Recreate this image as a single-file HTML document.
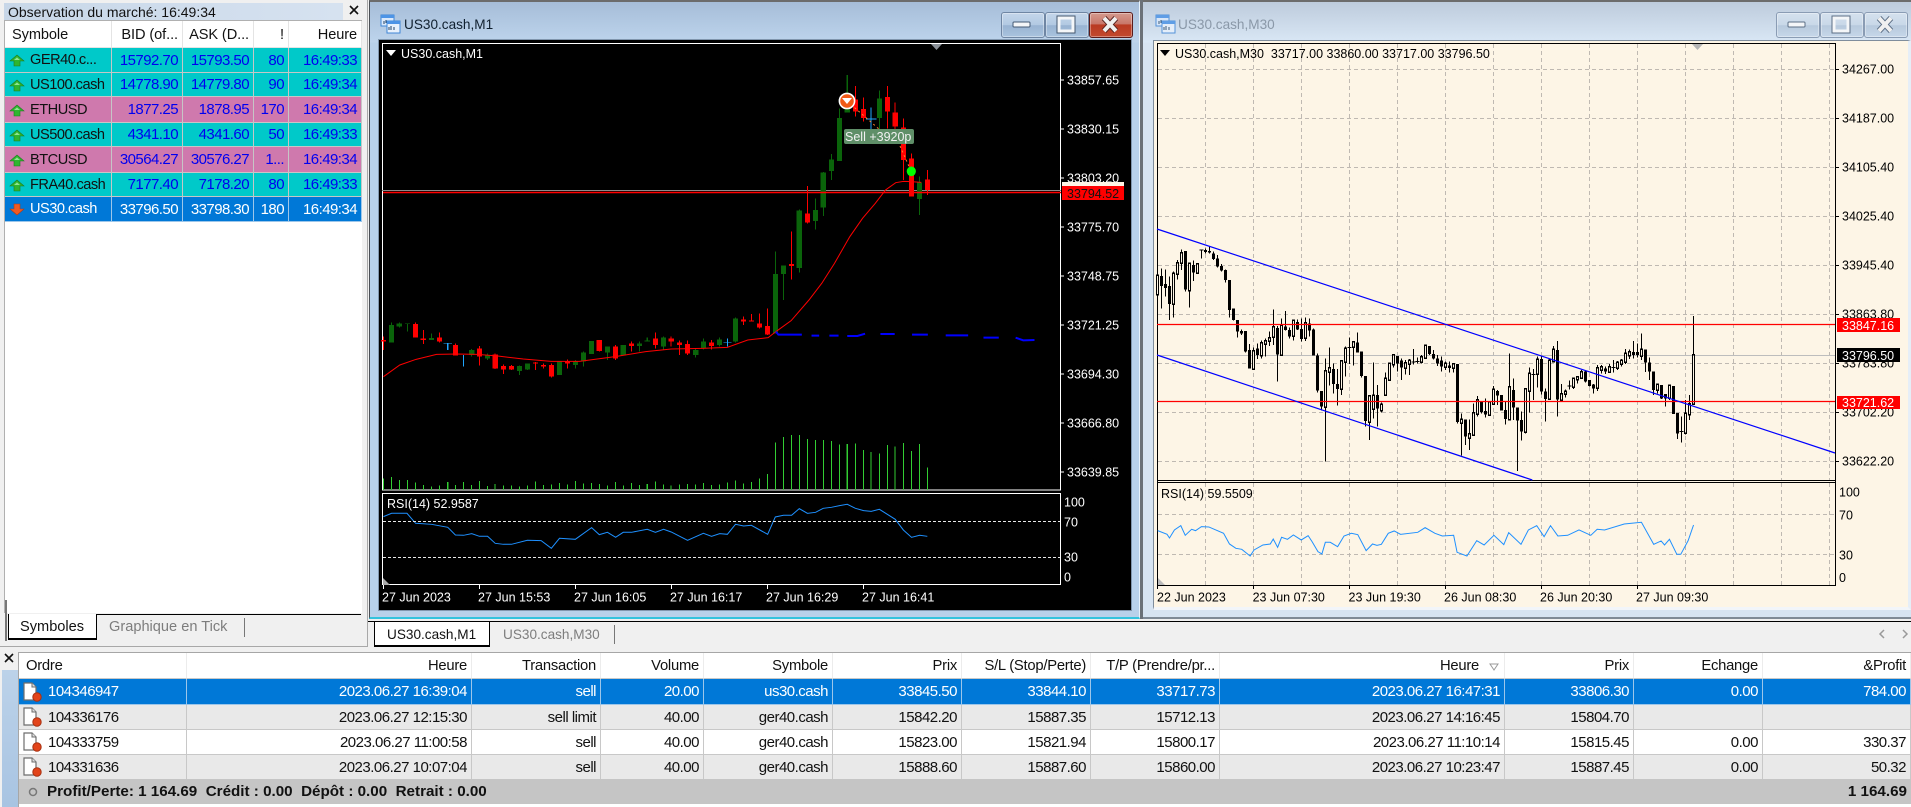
<!DOCTYPE html>
<html lang="fr"><head><meta charset="utf-8"><title>MT4</title>
<style>
html,body{margin:0;padding:0;width:1911px;height:807px;overflow:hidden;background:#f0f0f0;font-family:"Liberation Sans",sans-serif;color:#111}
.a{position:absolute;box-sizing:border-box}
.t{position:absolute;white-space:pre;line-height:18px}
table{position:absolute;border-collapse:separate;border-spacing:0;table-layout:fixed}
td{box-sizing:border-box;padding:0 4px 0 0;text-align:right;white-space:nowrap;overflow:hidden;vertical-align:middle}
#mw{left:5px;top:21px;width:357px;font-size:15px;letter-spacing:-.55px}
#mw td{border-right:1px solid #c6c6c6;border-bottom:1px solid #c6c6c6;color:#0000f0}
#mw tr.h td{font-size:14.6px;letter-spacing:-.1px;color:#111;border-right:1px solid #e4e4e4;border-bottom:1px solid #e4e4e4;background:#fff;padding-top:2px}
#mw td:first-child{text-align:left;padding-left:25px;color:#111;font-size:14.6px;letter-spacing:-.5px}
#mw tr.h td:first-child{padding-left:7px;font-size:14.6px;letter-spacing:-.1px}
.c td{background:#00c9c9}.p td{background:#cf79ad}
#mw tr.s td,#tr tr.s td{background:#0078d7;color:#fff;border-color:#9cc6ea}
#tr{left:19px;top:653px;width:1892px;font-size:15px;letter-spacing:-.5px}
#tr td{border-right:1px solid #c8c8c8;border-bottom:1px solid #c8c8c8;background:#fff}
#tr tr.h td{font-size:14.8px;letter-spacing:-.25px;border-right:1px solid #ececec;border-bottom:1px solid #c8c8c8}
#tr tr.g td{background:#e9e9e9}
#tr td:first-child{text-align:left;padding-left:29px}
#tr tr.h td:first-child{padding-left:7px}
.w{background:linear-gradient(#a6bdd8,#bdd4ec 40px,#b8d1ea 41px)}
.w2{background:linear-gradient(#bdcbdc,#d9e7f5 40px,#d7e4f2 41px)}
.b{position:absolute;top:12px;width:42px;height:24px;border:1px solid #6f86a3;border-radius:3px;background:linear-gradient(#c4d6ea,#b2c9e2 50%,#98b3d2 52%,#a9c3de);box-shadow:inset 0 0 0 1px rgba(255,255,255,.35)}
.x{background:linear-gradient(#d59a8e,#c9776a 45%,#b93a22 50%,#c2492f);border-color:#5a1b1b}
.b2{border-color:#8a9cb4;background:linear-gradient(#d5e1ee,#c9d8e8 50%,#b7c9dd 52%,#c6d7e9)}
text{font-family:"Liberation Sans",sans-serif;font-size:12.5px}
</style></head><body>

<!-- Market watch -->
<div class="a" style="left:4px;top:3px;width:339px;height:17px;background:linear-gradient(90deg,#c8d7e8,#d6e2f0)"></div>
<div class="t" style="left:8px;top:3px;font-size:14px">Observation du marché: 16:49:34</div>
<div class="a" style="left:4px;top:20px;width:358px;height:593px;background:#fff;border-left:1px solid #b0b0b0;border-top:1px solid #b0b0b0"></div>
<table id="mw"><colgroup><col style="width:107px"><col style="width:71px"><col style="width:71px"><col style="width:35px"><col style="width:73px"></colgroup>
<tr class="h" style="height:27px"><td>Symbole</td><td>BID (of...</td><td>ASK (D...</td><td>!</td><td>Heure</td></tr>
<tr class="c" style="height:25px"><td>GER40.c...</td><td>15792.70</td><td>15793.50</td><td>80</td><td>16:49:33</td></tr>
<tr class="c" style="height:24px"><td>US100.cash</td><td>14778.90</td><td>14779.80</td><td>90</td><td>16:49:34</td></tr>
<tr class="p" style="height:26px"><td>ETHUSD</td><td>1877.25</td><td>1878.95</td><td>170</td><td>16:49:34</td></tr>
<tr class="c" style="height:24px"><td>US500.cash</td><td>4341.10</td><td>4341.60</td><td>50</td><td>16:49:33</td></tr>
<tr class="p" style="height:26px"><td>BTCUSD</td><td>30564.27</td><td>30576.27</td><td>1...</td><td>16:49:34</td></tr>
<tr class="c" style="height:24px"><td>FRA40.cash</td><td>7177.40</td><td>7178.20</td><td>80</td><td>16:49:33</td></tr>
<tr class="s" style="height:25px"><td style="color:#fff">US30.cash</td><td>33796.50</td><td>33798.30</td><td>180</td><td>16:49:34</td></tr>
</table>

<!-- Left tabs -->
<div class="a" style="left:0;top:613px;width:367px;height:33px;background:#f0f0f0"></div>
<div class="a" style="left:5px;top:600px;width:2px;height:41px;background:#777"></div>
<div class="a" style="left:96px;top:614px;width:265px;height:1px;background:#000"></div>
<div class="a" style="left:8px;top:614px;width:89px;height:26px;background:#fff;border:1px solid #000;border-top:0;border-bottom-width:2px"></div>
<div class="t" style="left:20px;top:618px;font-size:14.6px">Symboles</div>
<div class="t" style="left:109px;top:618px;font-size:14.6px;color:#7d7d7d">Graphique en Tick</div>
<div class="a" style="left:244px;top:618px;width:1px;height:19px;background:#777"></div>
<div class="a" style="left:367px;top:0;width:1px;height:646px;background:#a8a8a8"></div>
<div class="a" style="left:0;top:646px;width:368px;height:1px;background:#a8a8a8"></div>

<!-- Window 1 -->
<div class="a w" style="left:369px;top:0;width:771px;height:619px;border:1px solid #4a4f55;border-right:1px solid #e8f2fa;border-top:2px solid #6c6c6c;border-bottom:2px solid #33c3dd"></div>
<div class="a" style="left:379px;top:40px;width:752px;height:570px;background:#000;box-shadow:0 0 0 1px #8096ad"></div>
<div class="t" style="left:404px;top:16px;font-size:13.6px;color:#10202f">US30.cash,M1</div>
<div class="b" style="left:1001px"></div><div class="b" style="left:1045px"></div><div class="b x" style="left:1089px"></div>

<!-- Window 2 -->
<div class="a" style="left:1140px;top:0;width:3px;height:619px;background:#6b7178"></div>
<div class="a w2" style="left:1143px;top:0;width:768px;height:619px;border-top:2px solid #6c6c6c;border-bottom:2px solid #7f8a96"></div>
<div class="a" style="left:1153px;top:40px;width:758px;height:570px;background:#fdf5e6;border:1px solid #7f8d9c;border-right:3px solid #e6eef7;border-bottom:3px solid #f2f5f9"></div>
<div class="t" style="left:1178px;top:16px;font-size:13.6px;color:#8a98a8">US30.cash,M30</div>
<div class="b b2" style="left:1776px"></div><div class="b b2" style="left:1820px"></div><div class="b b2" style="left:1864px"></div>

<!-- Lower tabs -->
<div class="a" style="left:368px;top:620px;width:1543px;height:32px;background:#f0f0f0"></div>
<div class="a" style="left:368px;top:621px;width:1543px;height:1px;background:#000"></div>
<div class="a" style="left:374px;top:622px;width:116px;height:25px;background:#fff;border:1px solid #000;border-top:0;border-bottom-width:2px"></div>
<div class="t" style="left:387px;top:626px;font-size:13.6px">US30.cash,M1</div>
<div class="t" style="left:503px;top:626px;font-size:13.6px;color:#7d7d7d">US30.cash,M30</div>
<div class="a" style="left:614px;top:625px;width:1px;height:19px;background:#777"></div>

<!-- Terminal -->
<div class="a" style="left:0;top:647px;width:1911px;height:160px;background:#f0f0f0"></div>
<div class="a" style="left:19px;top:652px;width:1892px;height:2px;background:#a6a6a6"></div>
<div class="a" style="left:18px;top:652px;width:1px;height:155px;background:#a6a6a6"></div>
<div class="a" style="left:2px;top:670px;width:16px;height:137px;background:linear-gradient(#bcd2e9,#a8c4e2)"></div>
<table id="tr"><colgroup><col style="width:168px"><col style="width:285px"><col style="width:129px"><col style="width:103px"><col style="width:129px"><col style="width:129px"><col style="width:129px"><col style="width:129px"><col style="width:285px"><col style="width:129px"><col style="width:129px"><col style="width:148px"></colgroup>
<tr class="h" style="height:26px"><td>Ordre</td><td>Heure</td><td>Transaction</td><td>Volume</td><td>Symbole</td><td>Prix</td><td>S/L (Stop/Perte)</td><td>T/P (Prendre/pr...</td><td style="padding-right:25px">Heure</td><td>Prix</td><td>Echange</td><td>&amp;Profit</td></tr>
<tr class="s" style="height:26px"><td>104346947</td><td>2023.06.27 16:39:04</td><td>sell</td><td>20.00</td><td>us30.cash</td><td>33845.50</td><td>33844.10</td><td>33717.73</td><td>2023.06.27 16:47:31</td><td>33806.30</td><td>0.00</td><td>784.00</td></tr>
<tr class="g" style="height:25px"><td>104336176</td><td>2023.06.27 12:15:30</td><td>sell limit</td><td>40.00</td><td>ger40.cash</td><td>15842.20</td><td>15887.35</td><td>15712.13</td><td>2023.06.27 14:16:45</td><td>15804.70</td><td></td><td></td></tr>
<tr style="height:25px"><td>104333759</td><td>2023.06.27 11:00:58</td><td>sell</td><td>40.00</td><td>ger40.cash</td><td>15823.00</td><td>15821.94</td><td>15800.17</td><td>2023.06.27 11:10:14</td><td>15815.45</td><td>0.00</td><td>330.37</td></tr>
<tr class="g" style="height:25px"><td>104331636</td><td>2023.06.27 10:07:04</td><td>sell</td><td>40.00</td><td>ger40.cash</td><td>15888.60</td><td>15887.60</td><td>15860.00</td><td>2023.06.27 10:23:47</td><td>15887.45</td><td>0.00</td><td>50.32</td></tr>
</table>
<div class="a" style="left:19px;top:779px;width:1892px;height:25px;background:#c5c5c5"></div>
<div class="t" style="left:47px;top:783px;font-size:15.2px;font-weight:bold">Profit/Perte: 1 164.69  Crédit : 0.00  Dépôt : 0.00  Retrait : 0.00</div>
<div class="t" style="right:4px;top:783px;font-size:15.2px;font-weight:bold">1 164.69</div>
<div class="a" style="left:19px;top:804px;width:1892px;height:3px;background:#fff"></div>

<!-- Graphics overlay -->
<svg class="a" style="left:0;top:0" width="1911" height="807" viewBox="0 0 1911 807" xmlns="http://www.w3.org/2000/svg">
<defs>
<g id="up"><path d="M0 6L7 0L14 6H10V11H4V6Z" fill="#2fb52f" stroke="#1e7d1e" stroke-width=".6"/><path d="M4 5L7 2.4L10 5Z" fill="#8fe48f"/></g>
<g id="dn"><path d="M0 5L7 11L14 5H10V0H4V5Z" fill="#ef5a22" stroke="#b83a10" stroke-width=".6"/></g>
<g id="doc"><path d="M1 1H9L13 5V18H1Z" fill="#fff" stroke="#6d6d6d" stroke-width="1.2"/><path d="M9 1V5H13" fill="#ddd" stroke="#6d6d6d"/><circle cx="14" cy="15" r="4.2" fill="#e2441a" stroke="#a83010"/></g>
<g id="wi"><rect x="0" y="0" width="13" height="11" fill="#dbe9fb" stroke="#3f86d6"/><rect x="0" y="0" width="13" height="3" fill="#4d94e6"/><rect x="6" y="6" width="13" height="12" fill="#e8f1fc" stroke="#3f86d6"/><rect x="6" y="6" width="13" height="3" fill="#4d94e6"/><path d="M3 6V9M5 5V8M8 12V15M10 11V15M13 12V15" stroke="#246" fill="none"/></g>
</defs>

<!-- panel close, arrows -->
<path d="M350 6L358 14M358 6L350 14M5 654L13 662M13 654L5 662" stroke="#111" stroke-width="1.6" fill="none"/>
<use href="#up" x="10" y="55"/><use href="#up" x="10" y="80"/><use href="#up" x="10" y="105"/><use href="#up" x="10" y="130"/><use href="#up" x="10" y="155"/><use href="#up" x="10" y="180"/><use href="#dn" x="10" y="204"/>
<use href="#doc" x="23" y="682"/><use href="#doc" x="23" y="707"/><use href="#doc" x="23" y="732"/><use href="#doc" x="23" y="757"/>
<circle cx="33" cy="792" r="3.5" fill="#c5c5c5" stroke="#777" stroke-width="1.5"/>
<path d="M1490 664H1498L1494 670Z" fill="none" stroke="#999"/>
<path d="M1884 630L1880 634L1884 638M1903 630L1907 634L1903 638" stroke="#999" stroke-width="1.5" fill="none"/>

<!-- title icons and buttons -->
<use href="#wi" x="381" y="15"/><use href="#wi" x="1156" y="15" opacity=".85"/>
<rect x="1013" y="22" width="17" height="5" rx="1" fill="#f4f6f8" stroke="#445a75"/>
<rect x="1059" y="18" width="14" height="13" fill="none" stroke="#f4f6f8" stroke-width="3"/><rect x="1057" y="16" width="18" height="17" fill="none" stroke="#45586f"/>
<path d="M1104 18L1116 31M1116 18L1104 31" stroke="#5a2420" stroke-width="6"/><path d="M1104 18L1116 31M1116 18L1104 31" stroke="#f0f0f0" stroke-width="4"/>
<rect x="1788" y="22" width="17" height="5" rx="1" fill="#f4f6f8" stroke="#5c6f86"/>
<rect x="1834" y="18" width="14" height="13" fill="none" stroke="#f4f6f8" stroke-width="3"/><rect x="1832" y="16" width="18" height="17" fill="none" stroke="#5c6f86"/>
<path d="M1879 18L1891 31M1891 18L1879 31" stroke="#5c6f86" stroke-width="6"/><path d="M1879 18L1891 31M1891 18L1879 31" stroke="#f0f0f0" stroke-width="4"/>

<!-- CHART 1 -->
<rect x="382.5" y="43.5" width="678" height="446.5" fill="#000" stroke="#fff"/>
<rect x="382.5" y="493.5" width="678" height="91" fill="#000" stroke="#fff"/>
<path d="M931 44H942L936.5 50Z" fill="#8a9097"/>
<path d="M386 50H396L391 56Z" fill="#fff"/>
<text x="401" y="58" fill="#fff">US30.cash,M1</text>
<path d="M383 578V585H390Z" fill="#aaa"/>

<path d="M382 190.5H1061" stroke="#8c8c8c" fill="none"/>
<g transform="translate(360,300) scale(.5102,.3333)" fill="none" shape-rendering="crispEdges">
<path stroke="#32cd32" stroke-width="2" d="M46 535V570M62 531V570M77 540V570M93 540V570M109 548V570M124 555V570M140 560V570M156 556V570M172 546V570M187 555V570M203 546V570M219 555V570M234 543V570M250 558V570M265 552V570M281 556V570M297 556V570M313 560V570M328 556V570M344 544V570M360 555V570M375 554V570M391 549V570M407 554V570M422 543V570M438 550V570M454 549V570M469 552V570M485 556V570M501 546V570M516 556V570M532 549V570M548 555V570M563 552V570M579 544V570M595 553V570M610 556V570M626 553V570M642 552V570M658 554V570M673 549V570M689 555V570M705 554V570M720 548V570M736 541V570M752 550V570M767 546V570M783 536V570M799 522V570M814 428V570M830 411V570M846 405V570M861 405V570M877 417V570M893 420V570M908 420V570M924 423V570M940 433V570M955 432V570M971 430V570M987 450V570M1002 456V570M1018 461V570M1034 435V570M1049 440V570M1065 429V570M1081 453V570M1097 432V570M1112 503V570"/>
<path stroke="#0a640a" stroke-width="2" d="M62 68V128M77 68V82M93 70V95M140 100V120M219 147V170M250 160V180M313 197V225M328 190V210M391 185V225M422 180V205M438 155V200M454 123V162M485 140V180M516 135V167M548 125V155M563 112V125M595 110V148M658 145V173M673 115V148M705 113V140M736 52V128"/>
<path stroke="#0a640a" stroke-width="10" d="M62 75V128M77 70V80M93 70V72M140 114V120M219 150V165M250 165V175M313 198V213M328 190V208M391 185V225M422 185V195M438 157V185M454 123V162M485 140V158M516 135V167M548 130V138M563 121V125M595 112V140M658 150V165M673 125V145M705 118V135M736 55V125"/>
<path stroke="#f00" stroke-width="2" d="M46 110V150M109 68V113M124 90V132M156 97V127M187 130V167M234 138V197M265 160V207M281 193V222M297 195V210M344 186V210M360 190V205M375 190V233M407 178V205M469 120V155M501 135V180M532 125V155M579 97V145M610 110V140M626 122V165M642 122V165M689 120V148M752 50V75M767 42V65M783 40V85M799 25V105"/>
<path stroke="#f00" stroke-width="10" d="M46 120V125M109 72V113M124 115V120M156 112V125M187 135V167M234 145V170M265 163V205M281 198V208M297 198V208M344 188V190M360 195V200M375 195V230M407 183V191M469 120V153M501 140V175M532 130V138M579 115V135M610 115V125M626 127V135M642 132V160M689 127V138M752 58V65M767 62V64M783 70V82M799 78V103"/>
<path stroke="#1fa6ff" stroke-width="2" d="M203 165V200M172 130V150M164 130H180M720 115V140M712 127H728"/>
</g>
<g transform="translate(360,0) scale(.5102,.3333)" fill="none" shape-rendering="crispEdges">
<path stroke="#0a640a" stroke-width="2" d="M814 755V1000M830 797V900M861 628V818M893 595V688M908 516V648M924 462V540M940 325V483M955 225V338M1018 272V390M1097 530V645"/>
<path stroke="#0a640a" stroke-width="10" d="M814 822V1000M830 797V822M861 632V804M893 630V663M908 518V623M924 478V513M940 354V483M955 325V338M1018 295V354M1097 548V597"/>
<path stroke="#f00" stroke-width="2" d="M846 695V838M877 558V670M971 258V350M987 293V365M1034 258V385M1049 307V400M1065 355V540M1081 460V590M1112 510V585"/>
<path stroke="#f00" stroke-width="10" d="M846 792V798M877 640V668M971 298V335M987 327V354M1034 291V335M1049 337V380M1065 382V480M1081 475V590M1112 538V570"/>
<path stroke="#1fa6ff" stroke-width="2" d="M1002 323V390M992 357H1012"/>
</g>
<g transform="translate(360,300) scale(.5102,.3333)" fill="none">
<path vector-effect="non-scaling-stroke" stroke="#f00" d="M46 230L78 195L110 178L150 163L190 162L230 163L270 168L320 177L375 184L430 184L500 170L560 155L610 147L670 145L720 142L760 120L800 113L815 95L845 62L880 0L905 -50L930 -110L960 -190L985 -245L1010 -290L1030 -330L1050 -352L1065 -356L1080 -355L1100 -353"/>
<path vector-effect="non-scaling-stroke" stroke="#00f" stroke-width="2" d="M815 95L820 104H866M885 107H900M920 107H938M955 108H975L990 101M1020 102H1048M1082 104H1113M1148 106H1192M1222 113H1252M1285 113L1300 121L1322 120"/>
<path vector-effect="non-scaling-stroke" stroke="#1e90ff" d="M46 650L62 640L92 640L109 670L140 673L172 682L187 705L203 706L219 701L234 709L250 709L265 730L281 733L297 733L328 721L355 722L375 745L391 715L422 718L454 683L469 704L485 697L501 712L516 697L532 697L563 688L579 697L595 688L610 696L642 721L673 700L689 709L705 701L720 703L736 673L752 678L767 676L799 703L814 651L830 646L846 646L861 626L877 640L893 637L908 625L924 622L940 617L955 613L971 625L987 632L1002 634L1018 628L1049 658L1065 690L1081 712L1097 706L1112 709"/>
</g>
<path d="M383 192.5H1061" stroke="#f00" fill="none" stroke-width="1.4"/>
<path d="M383 521.5H1060M383 557.5H1060" stroke="#e8e8e8" stroke-dasharray="3 2" fill="none"/>
<path d="M847 101L880 130M900 146L911 171" stroke="#ff7f2a" stroke-dasharray="2 3" fill="none"/>
<circle cx="847" cy="101" r="7.6" fill="#f15a16" stroke="#fff" stroke-width="1.6"/><path d="M842 98H852L847 104Z" fill="#fff"/>
<ellipse cx="911.3" cy="171.3" rx="4.6" ry="4.8" fill="#0f0"/>
<rect x="844" y="129" width="70" height="15" rx="2" fill="#5f8f68"/>
<text x="845" y="141" fill="#f2f2f2">Sell +3920p</text>
<g fill="#fff">
<text x="1067" y="84.5">33857.65</text><text x="1067" y="133.5">33830.15</text><text x="1067" y="182.5">33803.20</text><text x="1067" y="231.5">33775.70</text><text x="1067" y="280.5">33748.75</text><text x="1067" y="329.5">33721.25</text><text x="1067" y="378.5">33694.30</text><text x="1067" y="427.5">33666.80</text><text x="1067" y="476.5">33639.85</text>
<text x="1064" y="506.5">100</text><text x="1064" y="526.5">70</text><text x="1064" y="561.5">30</text><text x="1064" y="581.5">0</text>
<text x="387" y="508">RSI(14) 52.9587</text>
<text x="382" y="601.5">27 Jun 2023</text><text x="478" y="601.5">27 Jun 15:53</text><text x="574" y="601.5">27 Jun 16:05</text><text x="670" y="601.5">27 Jun 16:17</text><text x="766" y="601.5">27 Jun 16:29</text><text x="862" y="601.5">27 Jun 16:41</text>
</g>
<path d="M383.5 585V589M479.5 585V589M575.5 585V589M671.5 585V589M767.5 585V589M863.5 585V589M1061 80H1064M1061 129H1064M1061 178H1064M1061 227H1064M1061 276H1064M1061 325H1064M1061 374H1064M1061 423H1064M1061 472H1064" stroke="#fff" fill="none"/>
<rect x="1062" y="182" width="62" height="5" fill="#fff5e6"/>
<rect x="1062" y="186" width="62" height="14" fill="#f00"/>
<text x="1067" y="198" fill="#111">33794.52</text>

<!-- CHART 2 -->
<path d="M1205.5 44V480M1253.5 44V480M1301.5 44V480M1349.5 44V480M1397.5 44V480M1445.5 44V480M1493.5 44V480M1541.5 44V480M1589.5 44V480M1637.5 44V480M1685.5 44V480M1733.5 44V480M1781.5 44V480M1829.5 44V480M1205.5 483V585M1253.5 483V585M1301.5 483V585M1349.5 483V585M1397.5 483V585M1445.5 483V585M1493.5 483V585M1541.5 483V585M1589.5 483V585M1637.5 483V585M1685.5 483V585M1733.5 483V585M1781.5 483V585M1829.5 483V585M1158 69.5H1835M1158 118.5H1835M1158 167.5H1835M1158 216.5H1835M1158 265.5H1835M1158 314.5H1835M1158 363.5H1835M1158 412.5H1835M1158 461.5H1835M1158 514.5H1835M1158 554.5H1835" stroke="#bfb9b2" stroke-dasharray="4 3" fill="none"/>
<path d="M1157.5 43.5V585M1157 43.5H1835.5V585M1157 480.5H1836M1157 482.5H1836M1157 585.5H1836" stroke="#000" fill="none"/>
<path d="M1692 44H1703L1697.5 50Z" fill="#b5b5b5"/>
<path d="M1160 50H1170L1165 56Z" fill="#000"/>
<path d="M1158 578V585H1165Z" fill="#bbb"/>
<text x="1175" y="58" fill="#000" xml:space="preserve">US30.cash,M30  33717.00 33860.00 33717.00 33796.50</text>
<path d="M1157 355.5H1835" stroke="#bdbdbd" fill="none"/>

<defs>
<path id="wa" d="M8 108V162M55 102V190M67 70V100M79 40V68M103 72V150M127 73V98M295 335V385M319 310V345M331 304V310M343 295V302M355 262V290M379 258V344M415 243V287M451 250V293M511 394V500M523 385V395M559 365V445M571 327V365M595 307V320M643 470V545M655 468V505M679 495V510M691 417V463M703 372V418M715 347V372M751 370V383M763 363V371"/>
<path id="wb" d="M34 202V215M46 168V202M106 222V229M130 223V233M154 390V397M178 433V442M190 370V434M202 332V370M238 337V373M250 300V340M298 292V387M346 298V425M358 252V302M382 210V250M418 213V325M430 180V213M454 313V329M466 306V310M490 267V290M502 262V267M514 247V262M562 235V293M574 233V239M598 232V244M622 219V233M634 213V220M646 192V215M658 188V195M694 180V197M742 285V298M778 288V323M826 372V427M838 343V372M850 196V340"/>
</defs>
<g transform="translate(1155,240) scale(.3333)" fill="none" shape-rendering="crispEdges">
<path stroke="#000" stroke-width="3" d="M8 70V180M19 85V205M31 88V170M43 110V240M55 95V232M67 60V118M79 28V90M91 33V155M103 68V203M115 62V123M139 28V56M151 25V40M163 18V40M175 35V60M187 45V82M199 72V95M211 88V127M223 120V232M235 205V242M247 240V293M259 268V285M271 273V338M283 312V385M295 322V385M307 310V357M319 302V355M331 295V350M343 275V318M355 208V315M367 258V425M379 235V344M391 213V272M403 262V295M415 238V302M427 238V270M439 235V305M451 233V303M463 235V290M475 265V347M487 340V457M499 453V512M511 356V665M523 323V437M535 370V460M547 387V497M559 365V465M571 320V410M583 293V372M595 307V377M607 277V338M619 335V412M631 408V560M643 470V600M655 368V535M667 435V560M679 487V518M691 397V463M703 368V423M715 342V382M727 348V395M739 355V420M751 360V403M763 357V405M775 327V373M769 366H781M133 30H145M577 322H589"/>
<use href="#wa" stroke="#000" stroke-width="9" stroke-linecap="square"/>
<use href="#wa" stroke="#fdf5e6" stroke-width="3"/>
<path stroke="#000" stroke-width="9" d="M19 108V138M31 132V144M43 138V192M91 33V148M115 75V98M151 30V36M163 33V38M175 40V57M187 55V80M199 78V92M211 90V120M223 120V210M235 205V240M247 240V275M259 273V280M271 273V335M283 330V385M307 325V345M367 264V344M391 260V270M403 270V290M427 246V268M439 267V297M463 250V272M475 268V347M487 347V452M499 453V500M535 387V432M547 432V447M607 307V338M619 335V408M631 408V543M667 465V505M727 348V370M739 362V383"/>
</g>
<g transform="translate(1410,290) scale(.3333)" fill="none" shape-rendering="crispEdges">
<path stroke="#000" stroke-width="3" d="M22 203V220M34 195V220M46 165V203M58 168V195M70 180V208M82 195V228M94 200V245M106 215V240M118 215V247M130 220V248M142 222V400M154 370V497M166 388V465M178 388V480M190 340V437M202 318V380M214 335V370M226 325V382M238 335V377M250 288V340M262 300V345M274 315V362M286 335V404M298 190V387M310 265V390M322 352V543M334 365V452M346 298V430M358 232V368M370 237V330M382 200V293M394 198V313M406 295V395M418 205V325M430 168V213M442 153V380M454 282V329M466 298V323M478 272V298M490 263V297M502 258V280M514 240V265M526 240V277M538 270V290M550 282V310M562 225V303M574 225V250M586 230V252M598 222V248M610 210V247M622 213V240M634 207V230M646 177V222M658 178V207M670 153V205M682 160V203M694 130V210M706 178V246M718 203V270M730 245V315M742 280V310M754 285V327M766 312V350M778 288V330M790 288V372M802 369V447M814 380V458M826 330V433M838 315V390M850 78V345M16 214H28M364 254H376M472 288H484M604 232H616M808 425H820"/>
<use href="#wb" stroke="#000" stroke-width="9" stroke-linecap="square"/>
<use href="#wb" stroke="#fdf5e6" stroke-width="3"/>
<path stroke="#000" stroke-width="9" d="M58 168V192M70 192V205M82 205V220M94 212V230M118 226V234M142 222V396M166 388V440M214 335V366M226 363V373M262 303V317M274 315V362M286 360V387M310 300V353M322 352V392M334 390V425M394 207V305M406 304V327M442 180V328M526 245V275M538 270V288M550 284V296M586 236V245M670 186V195M682 186V195M706 178V218M718 217V245M730 245V300M754 285V325M766 312V325M790 288V372M802 369V430"/>
</g>
<path d="M1157 324.5H1835M1157 401.5H1835" stroke="#f00" stroke-width="1.3" fill="none"/>
<path d="M1157 229L1835 453M1157 355L1532.3 480" stroke="#00f" stroke-width="1.2" fill="none"/>
<g transform="translate(1140,300) scale(.4916,.3333)" fill="none">
<path vector-effect="non-scaling-stroke" stroke="#1e90ff" d="M36 692L55 703L60 714L70 690L83 677L92 706L105 688L113 692L125 680L140 681L170 700L182 732L195 745L207 748L224 768L232 750L250 735L265 732L271 717L280 742L288 712L300 718L312 705L328 720L342 707L350 725L362 755L370 762L377 727L387 727L402 740L415 708L430 700L443 704L460 752L473 732L482 736L491 733L505 700L517 693L530 703L565 697L580 683L600 700L615 708L638 706L645 757L665 768L685 722L700 735L720 706L740 734L750 698L775 733L790 690L807 677L822 710L835 677L850 708L870 706L893 690L917 706L930 688L945 690L985 672L1020 667L1045 733L1060 723L1067 735L1077 718L1092 763L1100 763L1115 722L1126 675"/>
</g>
<g fill="#000">
<text x="1842" y="73.5">34267.00</text><text x="1842" y="122.5">34187.00</text><text x="1842" y="171.5">34105.40</text><text x="1842" y="220.5">34025.40</text><text x="1842" y="269.5">33945.40</text><text x="1842" y="318.5">33863.80</text><text x="1842" y="367.5">33783.80</text><text x="1842" y="416.5">33702.20</text><text x="1842" y="465.5">33622.20</text>
<text x="1839" y="496.5">100</text><text x="1839" y="519.5">70</text><text x="1839" y="559.5">30</text><text x="1839" y="582">0</text>
<text x="1161" y="498">RSI(14) 59.5509</text>
<text x="1157" y="601.5">22 Jun 2023</text><text x="1252.6" y="601.5">23 Jun 07:30</text><text x="1348.5" y="601.5">23 Jun 19:30</text><text x="1444" y="601.5">26 Jun 08:30</text><text x="1540" y="601.5">26 Jun 20:30</text><text x="1636" y="601.5">27 Jun 09:30</text>
</g>
<path d="M1157.5 585V589M1253.5 585V589M1349.5 585V589M1445.5 585V589M1541.5 585V589M1637.5 585V589M1835 69.5H1839M1835 118.5H1839M1835 167.5H1839M1835 216.5H1839M1835 265.5H1839M1835 314.5H1839M1835 363.5H1839M1835 412.5H1839M1835 461.5H1839" stroke="#000" fill="none"/>
<rect x="1837" y="318" width="63" height="14" fill="#f00"/><text x="1842" y="330" fill="#fff">33847.16</text>
<rect x="1837" y="348" width="63" height="14" fill="#000"/><text x="1842" y="360" fill="#fff">33796.50</text>
<rect x="1837" y="396" width="63" height="13" fill="#f00"/><text x="1842" y="407" fill="#fff">33721.62</text>
</svg>
</body></html>
